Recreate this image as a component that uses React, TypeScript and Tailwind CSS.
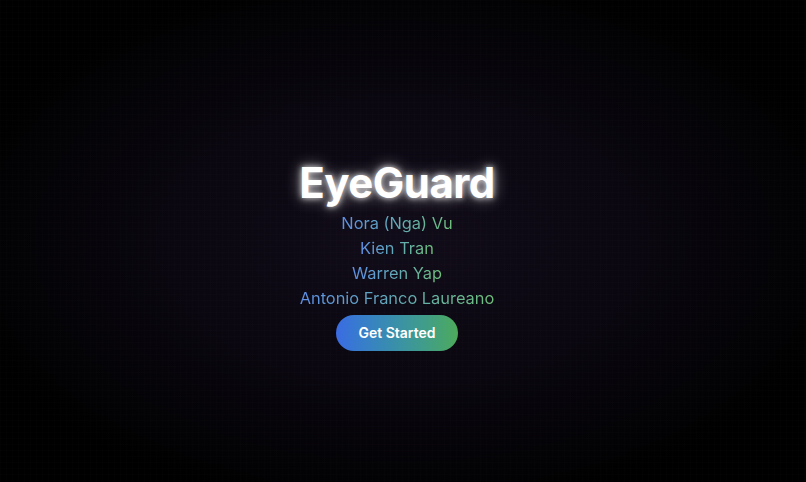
import React from 'react';

const members = ['Nora (Nga) Vu', 'Kien Tran', 'Warren Yap', 'Antonio Franco Laureano'];

export default function App() {
  return (
    <div className="relative flex h-screen w-full items-center justify-center overflow-hidden bg-black font-['Inter',sans-serif]">
      <div className="absolute inset-0 bg-[radial-gradient(ellipse_at_center,#110c19_0%,#0a0710_40%,#000000_80%)]" />
      <div className="absolute inset-0 bg-[linear-gradient(to_right,rgba(255,255,255,0.008)_1px,transparent_1px),linear-gradient(to_bottom,rgba(255,255,255,0.008)_1px,transparent_1px)] bg-[size:6px_6px]" />
      <div className="relative mr-[12px] mt-[26px] flex flex-col items-center">
        <h1 className="text-[42px] font-bold leading-[50px] tracking-[-0.5px] text-white [text-shadow:0_0_6px_rgba(255,255,255,0.9),0_0_16px_rgba(255,255,255,0.6)]">
          EyeGuard
        </h1>
        <div className="mt-[3px] flex flex-col items-center">
          {members.map((name) => (
            <span
              key={name}
              className="bg-gradient-to-r from-[#5f8fe6] to-[#6fc07a] bg-clip-text text-[16.4px] leading-[25px] text-transparent"
            >
              {name}
            </span>
          ))}
        </div>
        <button className="mt-[4px] h-[36px] w-[122px] rounded-full bg-gradient-to-r from-[#3b6be3] to-[#4daa5a] text-[14px] font-semibold text-white">
          Get Started
        </button>
      </div>
    </div>
  );
}
